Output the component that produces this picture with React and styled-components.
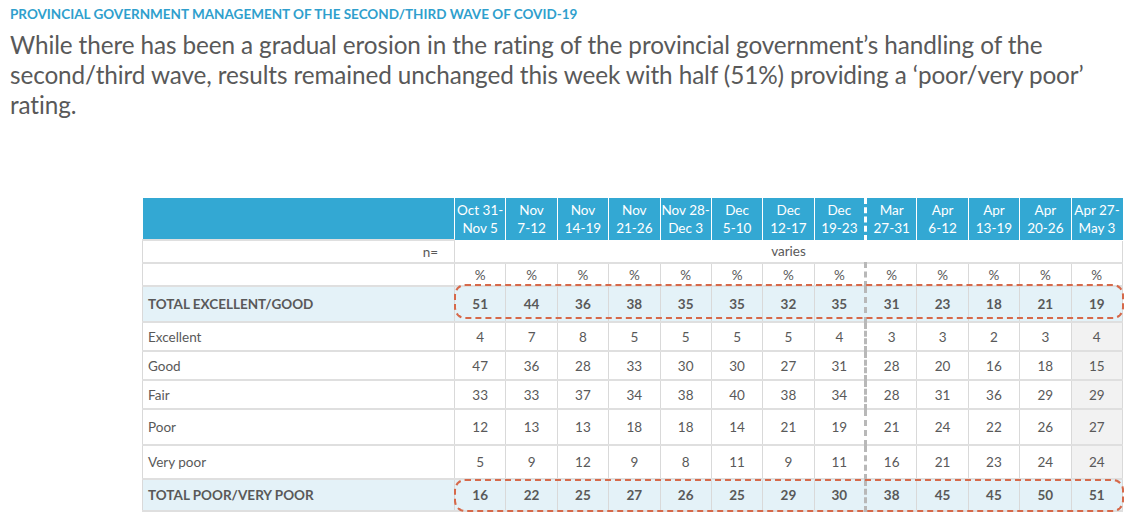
import React from "react";
import styled, { createGlobalStyle } from "styled-components";

const Global = createGlobalStyle`
  html, body { margin: 0; padding: 0; background: #fff; }
  body { font-family: Lato, "Open Sans", sans-serif; color: #595959; }
`;

const Page = styled.div`
  width: 1140px;
  height: 526px;
  box-sizing: border-box;
  padding: 6px 10px 0 10px;
  overflow: hidden;
`;

const Kicker = styled.div`
  font-size: 13.5px;
  font-weight: 700;
  color: #2f9fcd;
  line-height: 16px;
`;

const Lead = styled.p`
  margin: 8px 0 0 0;
  font-size: 24.3px;
  line-height: 30px;
  color: #595959;
  width: 1100px;
  letter-spacing: -0.1px;
`;

const TableWrap = styled.div`
  position: relative;
  margin: 78px 0 0 132px;
  width: 981px;
`;

const Table = styled.table`
  border-collapse: collapse;
  table-layout: fixed;
  width: 981px;
  font-size: 13.5px;
  color: #595959;
`;

const HeadCell = styled.th`
  background: #33a8d3;
  color: #fff;
  font-weight: 400;
  height: 41px;
  padding: 0;
  line-height: 18px;
  font-size: 13.5px;
  text-align: center;
  border-left: ${(p) => (p.$divider ? "3px dashed #fff" : "1px solid #fff")};
  border-bottom: 1px solid #fff;
`;

const LabelHead = styled.th`
  background: #33a8d3;
  height: 41px;
  padding: 0;
`;

const Cell = styled.td`
  height: ${(p) => p.$h}px;
  padding: 0;
  text-align: center;
  font-weight: ${(p) => (p.$bold ? 700 : 400)};
  background: ${(p) => (p.$bold ? "#e4f2f8" : p.$shade ? "#f2f2f2" : "#fff")};
  border-top: 2px solid #dfdfdf;
  border-bottom: 2px solid #dfdfdf;
  border-left: ${(p) => (p.$divider ? "3px dashed #b8b8b8" : "1px solid #d9d9d9")};
  border-right: 1px solid #d9d9d9;
`;

const LabelCell = styled.td`
  height: ${(p) => p.$h}px;
  padding: 0 0 0 5px;
  text-align: ${(p) => (p.$right ? "right" : "left")};
  padding-right: ${(p) => (p.$right ? "16px" : "0")};
  font-weight: ${(p) => (p.$bold ? 700 : 400)};
  background: ${(p) => (p.$bold ? "#e4f2f8" : "#fff")};
  border-top: 2px solid #dfdfdf;
  border-bottom: 2px solid #dfdfdf;
  border-left: 1px solid #d9d9d9;
  border-right: 1px solid #d9d9d9;
  color: #595959;
`;

const SpanCell = styled.td`
  height: 21px;
  padding: 0;
  text-align: center;
  border: 1px solid #d9d9d9;
  border-bottom: 2px solid #dfdfdf;
`;

const Highlight = styled.div`
  position: absolute;
  left: 312px;
  width: 670px;
  top: ${(p) => p.$top}px;
  height: ${(p) => p.$h}px;
  box-sizing: border-box;
  border: 2px dashed #d6694a;
  border-radius: 11px;
  pointer-events: none;
`;

const periods = [
  ["Oct 31-", "Nov 5"],
  ["Nov", "7-12"],
  ["Nov", "14-19"],
  ["Nov", "21-26"],
  ["Nov 28-", "Dec 3"],
  ["Dec", "5-10"],
  ["Dec", "12-17"],
  ["Dec", "19-23"],
  ["Mar", "27-31"],
  ["Apr", "6-12"],
  ["Apr", "13-19"],
  ["Apr", "20-26"],
  ["Apr 27-", "May 3"],
];

const rows = [
  { label: "%", h: 21, values: Array(13).fill("%"), pct: true },
  { label: "TOTAL EXCELLENT/GOOD", h: 34, bold: true, values: [51, 44, 36, 38, 35, 35, 32, 35, 31, 23, 18, 21, 19] },
  { label: "Excellent", h: 27, values: [4, 7, 8, 5, 5, 5, 5, 4, 3, 3, 2, 3, 4] },
  { label: "Good", h: 27, values: [47, 36, 28, 33, 30, 30, 27, 31, 28, 20, 16, 18, 15] },
  { label: "Fair", h: 27, values: [33, 33, 37, 34, 38, 40, 38, 34, 28, 31, 36, 29, 29] },
  { label: "Poor", h: 34, values: [12, 13, 13, 18, 18, 14, 21, 19, 21, 24, 22, 26, 27] },
  { label: "Very poor", h: 32, values: [5, 9, 12, 9, 8, 11, 9, 11, 16, 21, 23, 24, 24] },
  { label: "TOTAL POOR/VERY POOR", h: 30, bold: true, values: [16, 22, 25, 27, 26, 25, 29, 30, 38, 45, 45, 50, 51] },
];

export default function App() {
  return (
    <Page>
      <Global />
      <Kicker>PROVINCIAL GOVERNMENT MANAGEMENT OF THE SECOND/THIRD WAVE OF COVID-19</Kicker>
      <Lead>
        While there has been a gradual erosion in the rating of the provincial government’s handling of the
        second/third wave, results remained unchanged this week with half (51%) providing a ‘poor/very poor’
        rating.
      </Lead>
      <TableWrap>
        <Table>
          <colgroup>
            <col style={{ width: 312 }} />
            {periods.map((_, i) => (
              <col key={i} />
            ))}
          </colgroup>
          <thead>
            <tr>
              <LabelHead />
              {periods.map((p, i) => (
                <HeadCell key={i} $divider={i === 8}>
                  {p[0]}
                  <br />
                  {p[1]}
                </HeadCell>
              ))}
            </tr>
          </thead>
          <tbody>
            <tr>
              <LabelCell $h={21} $right>n=</LabelCell>
              <SpanCell colSpan={13}>varies</SpanCell>
            </tr>
            {rows.map((r, ri) => (
              <tr key={ri}>
                <LabelCell $h={r.h} $bold={r.bold}>{r.pct ? "" : r.label}</LabelCell>
                {r.values.map((v, i) => (
                  <Cell
                    key={i}
                    $h={r.h}
                    $bold={r.bold}
                    $divider={i === 8}
                    $shade={!r.bold && !r.pct && i === 12}
                  >
                    {v}
                  </Cell>
                ))}
              </tr>
            ))}
          </tbody>
        </Table>
        <Highlight $top={86} $h={35} />
        <Highlight $top={281} $h={33} />
      </TableWrap>
    </Page>
  );
}
